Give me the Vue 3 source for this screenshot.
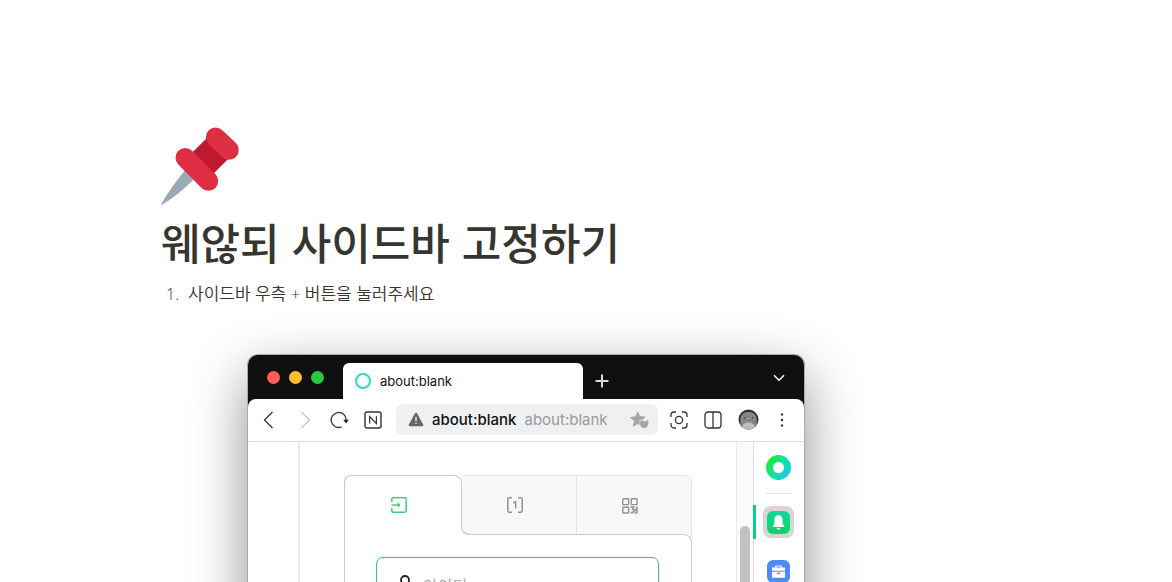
<script setup>
const lights = ['red', 'amber', 'green']
</script>

<template>
  <main class="page">
    <article class="column">
      <svg class="pin" viewBox="0 0 36 36" aria-hidden="true">
        <path d="M11.8 19.1 16 23.2Q8 31.6 0.2 36L0 35.8Q4.3 28 11.8 19.1z" fill="#99aab5" />
        <path d="M21.3 5 31.1 14.7 20.5 25.3 10.7 15.5z" fill="#be1931" />
        <path d="M34.6 7.4a4.6 4.6 0 0 1 0 6.4 4.6 4.6 0 0 1-6.4 0L22 7.8a4.5 4.5 0 0 1 0-6.3 4.5 4.5 0 0 1 6.3 0zM25.1 21.7a4.6 4.6 0 0 1 0 6.4 4.6 4.6 0 0 1-6.4 0L8 17.3a4.5 4.5 0 0 1 0-6.3 4.5 4.5 0 0 1 6.3 0z" fill="#dd2e44" />
      </svg>
      <h1>웨않되 사이드바 고정하기</h1>
      <ol>
        <li>사이드바 우측 + 버튼을 눌러주세요</li>
      </ol>

      <section class="window" aria-label="about:blank">
        <header class="tabs">
          <div class="lights"><i v-for="c in lights" :key="c" :class="c"></i></div>
          <div class="tab"><i class="ring"></i><span>about:blank</span></div>
          <button class="add" aria-label="새 탭">
            <svg width="14" height="14" viewBox="0 0 14 14"><path d="M7 0.5v13M0.5 7h13" stroke="#d9d9d9" stroke-width="2" /></svg>
          </button>
          <button class="more" aria-label="탭 목록">
            <svg width="12" height="8" viewBox="0 0 12 8"><path d="M1 1.2l5 5 5-5" fill="none" stroke="#fff" stroke-width="1.5" /></svg>
          </button>
        </header>

        <nav class="toolbar" aria-label="탐색">
          <button class="back" aria-label="뒤로">
            <svg width="11" height="18" viewBox="0 0 11 18"><path d="M9.5 1 1.5 9l8 8" fill="none" stroke="#333" stroke-width="1.3" /></svg>
          </button>
          <button class="forward" aria-label="앞으로">
            <svg width="11" height="18" viewBox="0 0 11 18"><path d="m1.5 1 8 8-8 8" fill="none" stroke="#c4c4c4" stroke-width="1.3" /></svg>
          </button>
          <button class="reload" aria-label="새로고침">
            <svg width="20" height="18" viewBox="0 0 20 18"><path d="M11.6 15.9A7.5 7.5 0 1 1 16.2 9" fill="none" stroke="#333" stroke-width="1.3" /><path d="M13.2 8.8h5.6L16 12.6z" fill="#222" /></svg>
          </button>
          <button class="note" aria-label="N">
            <svg width="18" height="18" viewBox="0 0 18 18"><rect x="1" y="1" width="16" height="16" rx="2" fill="none" stroke="#333" stroke-width="1.4" /><path d="M5.6 12.6V5.5l6.8 7V5.3" fill="none" stroke="#333" stroke-width="1.2" /></svg>
          </button>
          <div class="address">
            <svg width="16" height="15" viewBox="0 0 16 15"><path d="M8 2 14 13H2z" fill="#666" stroke="#666" stroke-width="2.6" stroke-linejoin="round" /><path d="M8 5v4M8 10.6v1.5" stroke="#eff0f2" stroke-width="1.4" /></svg>
            <b>about:blank</b><span>about:blank</span>
            <svg class="star" width="19" height="18" viewBox="0 0 19 18"><path d="M7.7 1 9.6 5.6 15 6.1 12 8.4H9.1v4.9L7.5 12.5 3.3 15.1 4.5 10.1 0.6 6.5 5.8 5.8z" fill="#a5a5a5" stroke="#a5a5a5" stroke-linejoin="round" /><path d="M10.3 10.3q1.6-1.1 3.3 0 2 1.1 4.4-.8V13q-.8 4-4 4-3.4-.7-3.7-4z" fill="#a5a5a5" stroke="#a5a5a5" stroke-width=".7" /></svg>
          </div>
          <button class="capture" aria-label="캡처">
            <svg width="18" height="18" viewBox="0 0 18 18"><path d="M1 6V4a3 3 0 0 1 3-3h2M12 1h2a3 3 0 0 1 3 3v2M17 12v2a3 3 0 0 1-3 3h-2M6 17H4a3 3 0 0 1-3-3v-2" fill="none" stroke="#333" stroke-width="1.3" /><circle cx="9" cy="9" r="3.6" fill="none" stroke="#333" stroke-width="1.3" /></svg>
          </button>
          <button class="split" aria-label="화면 분할">
            <svg width="18" height="18" viewBox="0 0 18 18"><rect x="1" y="1" width="16" height="16" rx="3" fill="none" stroke="#333" stroke-width="1.3" /><path d="M9 1v16" stroke="#333" stroke-width="1.3" /></svg>
          </button>
          <button class="profile" aria-label="프로필">
            <svg width="21" height="21" viewBox="0 0 21 21"><defs><clipPath id="face"><circle cx="10.5" cy="10.5" r="10" /></clipPath></defs><g clip-path="url(#face)"><path d="M0 0h21v21H0z" fill="#303030" /><path d="M2.4 21V11C2.4 5 5.8 2.9 10.5 2.9s8.2 2.1 8.2 8.1v10z" fill="#858585" /><ellipse cx="10.5" cy="18.5" rx="6.5" ry="5" fill="#bdbdbd" /><ellipse cx="10.5" cy="9.5" rx="2.1" ry="1.2" fill="#b8b8b8" stroke="#555" stroke-width=".6" /><path d="M5.8 8.9h1.2M14 8.9h1.2" stroke="#333" stroke-width="1.1" /></g></svg>
          </button>
          <button class="menu" aria-label="메뉴">
            <svg width="4" height="16" viewBox="0 0 4 16"><g fill="#333"><circle cx="2" cy="2.5" r="1.2" /><circle cx="2" cy="8" r="1.2" /><circle cx="2" cy="13.5" r="1.2" /></g></svg>
          </button>
        </nav>

        <div class="view">
          <div class="gutter"></div>
          <div class="content">
            <form class="card" @submit.prevent>
              <div class="modes">
                <button class="mode active" type="button" aria-label="로그인">
                  <svg width="16" height="16" viewBox="0 0 16 16" fill="none" stroke="#42cf7b" stroke-width="1.5"><path d="M.8 5V2.2Q.8.8 2.2.8h11.6q1.4 0 1.4 1.4v11.6q0 1.4-1.4 1.4H2.2q-1.4 0-1.4-1.4V11M.5 8h8" /><path d="M6.7 5.2 9.7 8l-3 2.8z" fill="#42cf7b" stroke="none" /></svg>
                </button>
                <button class="mode once" type="button" aria-label="일회용 번호">
                  <svg width="16" height="16" viewBox="0 0 16 16" fill="none" stroke="#929292" stroke-width="1.5"><path d="M5 .8H2.2Q.8.8.8 2.2v11.6q0 1.4 1.4 1.4H5M11 .8h2.8q1.4 0 1.4 1.4v11.6q0 1.4-1.4 1.4H11M6.2 6l2.4-1.2v6.8" /></svg>
                </button>
                <button class="mode qr" type="button" aria-label="QR코드">
                  <svg width="16" height="16" viewBox="0 0 16 16" fill="none" stroke="#929292" stroke-width="1.4"><rect x=".8" y=".8" width="5.8" height="5.8" rx=".6" /><rect x="9.2" y=".8" width="5.8" height="5.8" rx=".6" /><rect x=".8" y="9.2" width="5.8" height="5.8" rx=".6" /><path d="M8.5 9.2h4M10 12l2-2M8.5 14.7h2l2-2M14.8 8.5v7M12.5 15h2M13 11v2" stroke-width="1.7" /></svg>
                </button>
              </div>
              <div class="fields">
                <label class="field">
                  <svg width="18" height="18" viewBox="0 0 18 18" fill="none" stroke="#222" stroke-width="1.8"><circle cx="9" cy="5" r="4" /><path d="M2 17v-2q0-4 7-4t7 4v2" /></svg>
                  <input type="text" placeholder="아이디" aria-label="아이디" />
                </label>
              </div>
            </form>
          </div>
          <div class="track"><div class="thumb"></div></div>
          <aside class="side">
            <button class="whale" aria-label="홈"></button>
            <hr />
            <button class="bell" aria-label="알림">
              <svg width="23" height="23" viewBox="0 0 23 23"><path d="M11.5 4.2c-3 0-4.1 2.2-4.1 4.8v4L5.7 15v1h11.6v-1L15.6 13V9c0-2.6-1.1-4.8-4.1-4.8zM9.6 17h3.8q-.5 1.8-1.9 1.8T9.6 17z" fill="#fff" /></svg>
            </button>
            <button class="case" aria-label="도구">
              <svg width="23" height="23" viewBox="0 0 23 23"><path d="M8.8 8V6h5.4v2" fill="none" stroke="#fff" stroke-width="1.1" /><path d="M5 7.6h13v3.2H5zM5 11.8h13v6H5z" fill="#fff" /><path d="M9.8 13.3h3.4" stroke="#4f8bf7" stroke-width="1.3" /></svg>
            </button>
          </aside>
        </div>
      </section>
    </article>
  </main>
</template>

<style>
body { margin: 0; background: #fff; }
</style>

<style scoped>
* { box-sizing: border-box; }
button { border: 0; padding: 0; background: none; display: flex; align-items: center; justify-content: center; flex: none; }
svg { display: block; flex: none; }
.page { height: 100vh; overflow: hidden; padding: 127px 24px 0 161px; color: #37352f; font-family: "Liberation Sans", "Noto Sans CJK KR", sans-serif; }
.column { max-width: 730px; }
.pin { width: 78px; height: 78px; }
h1 { margin: 14px 0 0; font-size: 43px; line-height: 52px; font-weight: 500; }
ol { margin: 10px 0 0; padding: 0 0 0 5px; font: 350 17px/26px "Open Sans", "Noto Sans CJK KR", sans-serif; list-style: none; counter-reset: step; }
li { display: flex; counter-increment: step; }
li::before { content: counter(step) "."; width: 22px; font-size: 16px; }
.window { max-width: 556px; margin: 48px auto 0; background: #0f0f0f; border-radius: 10px 10px 0 0; box-shadow: 0 0 0 1px #aaa, 0 20px 56px rgba(0, 0, 0, .45); font-family: Inter, "Noto Sans CJK KR", sans-serif; }
.tabs { display: flex; height: 44px; padding: 8px 19px 0; }
.lights { display: flex; gap: 9px; width: 76px; padding-top: 8px; }
.lights i { width: 13px; height: 13px; border-radius: 50%; }
.red { background: #ff5f57; }
.amber { background: #febc2e; }
.green { background: #28c840; }
.tab { display: flex; align-items: center; gap: 9px; flex: 0 1 240px; padding-left: 12px; background: #fff; border-radius: 6px 6px 0 0; color: #111; font-size: 13px; }
.ring { width: 16px; height: 16px; border: 2px solid #2fdab8; border-radius: 50%; }
.add { width: 38px; }
.more { margin: 0 0 6px auto; width: 12px; }
.toolbar { display: flex; align-items: center; height: 43px; padding: 0 20px 1px 15px; background: #fff; border-bottom: 1px solid #d9dfe1; border-radius: 8px 8px 0 0; }
.forward { margin-left: 26px; }
.reload { margin-left: 19px; }
.note { margin-left: 14px; }
.address { display: flex; align-items: center; flex: 1; min-width: 0; height: 31px; margin: 0 12px 0 14px; padding: 0 9px 0 12px; border-radius: 7px; background: #eff0f2; font-size: 15px; color: #999; }
.address b { margin: 0 8px; color: #111; font-weight: 500; }
.star { margin-left: auto; }
.split { margin-left: 16px; }
.profile { margin-left: 16px; }
.menu { margin-left: 21px; }
.view { display: grid; grid-template-columns: 52px 1fr 17px 51px; min-height: 260px; background: #fff; }
.gutter { border-right: 2px solid #e6eaec; }
.content { padding: 33px 44px 0; }
.card { max-width: 348px; margin: 0 auto; }
.modes { display: grid; grid-template-columns: 117px 1fr 116px; height: 60px; border-left: 1px solid #c9cacb; border-radius: 8px 0 0 0; }
.mode { position: relative; padding-right: 9px; background: #f7f8fa; border-top: 1px solid #e3e4e5; }
.once { border-radius: 0 0 0 8px; border-bottom: 1px solid #c9cacb; }
.once::before { content: ""; position: absolute; left: -1px; top: 8px; bottom: -1px; width: 12px; border: 1px solid #c9cacb; border-width: 0 0 1px 1px; border-radius: 0 0 0 8px; }
.qr { border-left: 1px solid #e3e4e5; border-right: 1px solid #e3e4e5; border-radius: 0 8px 0 0; }
.active { align-self: start; height: 51px; margin-left: -1px; padding-top: 8px; border: 1px solid #c9cacb; border-width: 1px 1px 0 1px; border-radius: 8px 8px 0 0; background: #fff; }
.fields { position: relative; padding: 22px 33px 0 31px; height: 180px; border-left: 1px solid #c9cacb; }
.fields::after { content: ""; position: absolute; right: 0; top: -1px; bottom: 0; width: 116px; border: 1px solid #c9cacb; border-width: 1px 1px 0 0; border-radius: 0 8px 0 0; background: #fff; }
.field { position: relative; z-index: 1; display: flex; align-items: flex-start; gap: 9px; height: 56px; padding: 17px 19px; border: 1px solid #36ca70; border-radius: 7px 7px 0 0; }
.field input { flex: 1; min-width: 0; border: 0; padding: 0; outline: 0; font: 16px/20px "Noto Sans CJK KR", sans-serif; background: none; }
.field input::placeholder { color: #aaa; opacity: 1; }
.track { border-left: 1px solid #e9eaeb; background: #fafafa; padding: 84px 3px 0; }
.thumb { height: 180px; border-radius: 5px; background: #c1c1c1; }
.side { display: flex; flex-direction: column; align-items: center; border-left: 1px solid #dcdfe3; padding: 13px 2px 0 0; }
.whale { width: 25px; height: 25px; border-radius: 50%; background: radial-gradient(circle, #fff 0 5px, transparent 6px), linear-gradient(125deg, #19ef32 15%, #12ddb0 55%, #20c6f2); }
hr { width: 27px; margin: 13px 0 12px; border: 0; border-top: 1px solid #e5e5e5; }
.bell { position: relative; width: 31px; height: 32px; background: #d6d6d6; border-radius: 8px; }
.bell::before { content: ""; position: absolute; left: -10px; top: -1px; width: 3px; height: 34px; background: #0ccb91; }
.bell svg { border-radius: 6px; background: linear-gradient(#14d59b, #0bd569); }
.case { width: 23px; height: 23px; margin-top: 22px; border-radius: 6px; background: #4f8bf7; }
</style>
